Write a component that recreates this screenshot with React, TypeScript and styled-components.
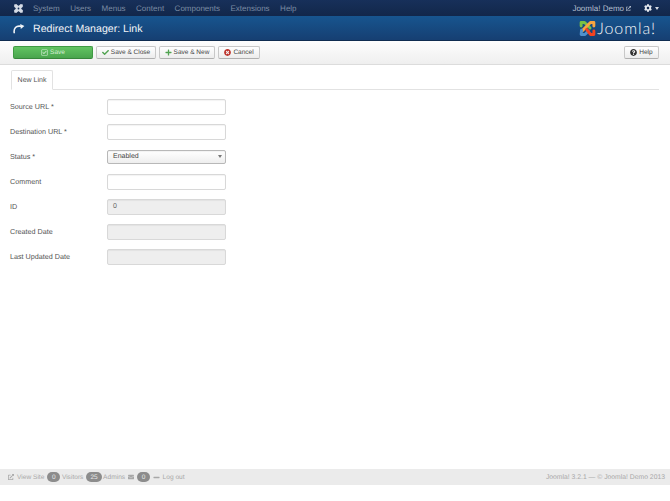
import React from "react";
import styled, { createGlobalStyle } from "styled-components";
import { FaCheck, FaPlus, FaTimesCircle, FaQuestionCircle, FaCog, FaRegCheckSquare, FaExternalLinkAlt, FaEnvelope, FaMinus } from "react-icons/fa";

const GlobalStyle = createGlobalStyle`
  html, body { margin: 0; padding: 0; background: #fff; }
  body { font-family: "Liberation Sans", Arial, sans-serif; font-size: 8px; color: #333; text-rendering: geometricPrecision; }
`;

const Page = styled.div`
  width: 670px;
  height: 501px;
  display: flex;
  flex-direction: column;
  overflow: hidden;
`;

const NavBar = styled.nav`
  height: 16px;
  flex: none;
  display: flex;
  align-items: center;
  padding: 0 11px 0 13px;
  background: linear-gradient(#17305a, #12274a);
  color: #7b8ba3;
  font-size: 8px;
`;

const NavLogo = styled.svg`
  width: 11px;
  height: 11px;
  margin-right: 9px;
`;

const NavItem = styled.span`
  margin-right: 10.5px;
`;

const NavRight = styled.div`
  margin-left: auto;
  display: flex;
  align-items: center;
  color: #b4bfd0;
`;

const SmallIcon = styled.span<{ $gap?: number; $left?: number }>`
  display: inline-flex;
  margin-left: ${(p) => p.$left ?? 0}px;
  margin-right: ${(p) => p.$gap ?? 0}px;
`;

const Caret = styled.span<{ $color: string }>`
  display: inline-block;
  width: 0;
  height: 0;
  border-left: 2.5px solid transparent;
  border-right: 2.5px solid transparent;
  border-top: 3px solid ${(p) => p.$color};
`;

const TitleBar = styled.header`
  height: 25px;
  flex: none;
  box-sizing: border-box;
  display: flex;
  align-items: center;
  padding: 1px 14px 0 13px;
  background: linear-gradient(#17558f, #163f72);
  border-bottom: 1px solid #0f2c50;
  color: #f2f5f8;
`;

const TitleText = styled.h1`
  margin: 0 0 0 8px;
  font-size: 10.6px;
  font-weight: 400;
`;

const Brand = styled.div`
  margin-left: auto;
  display: flex;
  align-items: center;
`;

const BrandName = styled.span`
  font-family: "Lato", "Open Sans", sans-serif;
  font-weight: 300;
  font-size: 16px;
  margin-left: 1px;
  letter-spacing: 0.9px;
  color: #f4f6f8;
`;

const Toolbar = styled.div`
  height: 24px;
  flex: none;
  box-sizing: border-box;
  display: flex;
  align-items: center;
  gap: 3px;
  padding: 0 11px 0 13px;
  background: linear-gradient(#fdfdfd, #efefef);
  border-bottom: 1px solid #dcdcdc;
`;

const Btn = styled.button<{ $width: number; $primary?: boolean }>`
  width: ${(p) => p.$width}px;
  height: 13px;
  box-sizing: border-box;
  padding: 0;
  display: flex;
  align-items: center;
  justify-content: center;
  gap: 2px;
  font: 6.5px "Liberation Sans", Arial, sans-serif;
  text-rendering: geometricPrecision;
  border-radius: 2px;
  border: 1px solid ${(p) => (p.$primary ? "#3f9a43" : "#c8c8c8")};
  border-bottom-color: ${(p) => (p.$primary ? "#37873b" : "#b0b0b0")};
  background: ${(p) => (p.$primary ? "linear-gradient(#62c462, #4aa54e)" : "linear-gradient(#fff, #ececec)")};
  color: ${(p) => (p.$primary ? "#d7eed7" : "#444")};
`;

const RightBtn = styled(Btn)`
  margin-left: auto;
`;

const Content = styled.main`
  flex: 1;
  padding: 5px 11px 0 11px;
`;

const Tabs = styled.div`
  height: 19px;
  border-bottom: 1px solid #e2e2e2;
  display: flex;
`;

const Tab = styled.div`
  height: 20px;
  width: 42px;
  box-sizing: border-box;
  display: flex;
  align-items: center;
  justify-content: center;
  background: #fff;
  border: 1px solid #e2e2e2;
  border-bottom-color: #fff;
  border-radius: 2px 2px 0 0;
  font-size: 7px;
  color: #555;
`;

const Form = styled.form`
  margin-top: 9px;
  margin-left: -1px;
  display: flex;
  flex-direction: column;
  gap: 10px;
`;

const Row = styled.div`
  display: flex;
  align-items: center;
  height: 15px;
`;

const Label = styled.label`
  width: 97px;
  flex: none;
  font-size: 7.2px;
  color: #555;
`;

const Field = styled.div<{ $disabled?: boolean }>`
  width: 119px;
  height: 16px;
  box-sizing: border-box;
  border: 1px solid #d8d8d8;
  border-radius: 2px;
  background: ${(p) => (p.$disabled ? "#eeeeee" : "#fff")};
  box-shadow: inset 0 1px 1px rgba(0, 0, 0, 0.05);
  padding: 0 5px;
  display: flex;
  align-items: center;
  font-size: 7px;
  color: #666;
`;

const SelectField = styled(Field)`
  height: 14px;
  justify-content: space-between;
  background: linear-gradient(#fff, #eee);
  border-color: #b8b8b8;
  color: #444;
  padding-right: 3px;
`;

const Footer = styled.footer`
  height: 16px;
  flex: none;
  margin-bottom: 16px;
  box-sizing: border-box;
  padding: 0 5px 0 8px;
  display: flex;
  align-items: center;
  background: #ebebeb;
  color: #a8a8a8;
  font-size: 6.6px;
`;

const Badge = styled.span`
  display: inline-flex;
  align-items: center;
  justify-content: center;
  height: 10px;
  min-width: 13px;
  padding: 0 4px;
  box-sizing: border-box;
  margin: 0 1.5px 0 3px;
  border-radius: 5px;
  background: #8c8c8c;
  color: #e8e8e8;
  font-size: 6.5px;
`;

const Copyright = styled.span`
  margin-left: auto;
  font-size: 6.8px;
`;

const navItems = ["System", "Users", "Menus", "Content", "Components", "Extensions", "Help"];

const fields = [
  { label: "Source URL *" },
  { label: "Destination URL *" },
  { label: "Status *", select: "Enabled" },
  { label: "Comment" },
  { label: "ID", disabled: true, value: "0" },
  { label: "Created Date", disabled: true },
  { label: "Last Updated Date", disabled: true },
];

const JoomlaMark = ({ size }: { size: number }) => (
  <svg width={size} height={size} viewBox="0 0 20 20" fill="none" strokeWidth="3.4" strokeLinecap="round" strokeLinejoin="round">
    <path d="M2.5 7 L2.5 3 L6.5 3 L13 9.5" stroke="#7ac143" />
    <path d="M17.5 7 L17.5 3 L13.5 3 L4 12.5" stroke="#f9a541" />
    <path d="M3 12 L2.5 17 L7 17 L11 13" stroke="#5091cd" />
    <path d="M9 11 L13.5 17 L17.5 17 L17.5 13" stroke="#f44321" />
  </svg>
);

export default function App() {
  return (
    <Page>
      <GlobalStyle />
      <NavBar>
        <NavLogo viewBox="0 0 20 20" fill="none" stroke="#d5dce6" strokeWidth="3.2" strokeLinejoin="round">
          <path d="M3 7 L3 3 L7 3 L17 13 L17 17 L13 17 L3 7 Z" fill="#d5dce6" strokeWidth="1.5" />
          <path d="M17 7 L17 3 L13 3 L3 13 L3 17 L7 17 L17 7 Z" fill="#d5dce6" strokeWidth="1.5" />
          <circle cx="10" cy="10" r="1.6" fill="#17305a" stroke="none" />
        </NavLogo>
        {navItems.map((item) => (
          <NavItem key={item}>{item}</NavItem>
        ))}
        <NavRight>
          Joomla! Demo
          <SmallIcon $left={2} $gap={13}>
            <FaExternalLinkAlt size={5} />
          </SmallIcon>
          <SmallIcon $gap={3}>
            <FaCog size={8} color="#e4e8ee" />
          </SmallIcon>
          <Caret $color="#d5dbe4" />
        </NavRight>
      </NavBar>
      <TitleBar>
        <svg width="12" height="12" viewBox="0 0 20 20" fill="none" stroke="#f2f5f8" strokeWidth="2.6" strokeLinecap="round">
          <path d="M2 16 C1 9 5 4 13 5.5" />
          <path d="M12 1.5 L19 5 L13 10 Z" fill="#f2f5f8" stroke="none" />
        </svg>
        <TitleText>Redirect Manager: Link</TitleText>
        <Brand>
          <JoomlaMark size={17} />
          <BrandName>Joomla!</BrandName>
        </Brand>
      </TitleBar>
      <Toolbar>
        <Btn $width={80} $primary>
          <FaRegCheckSquare size={7} /> Save
        </Btn>
        <Btn $width={60}>
          <FaCheck size={7} color="#51a351" /> Save &amp; Close
        </Btn>
        <Btn $width={56}>
          <FaPlus size={7} color="#51a351" /> Save &amp; New
        </Btn>
        <Btn $width={42}>
          <FaTimesCircle size={7} color="#bd362f" /> Cancel
        </Btn>
        <RightBtn $width={35}>
          <FaQuestionCircle size={7} color="#333" /> Help
        </RightBtn>
      </Toolbar>
      <Content>
        <Tabs>
          <Tab>New Link</Tab>
        </Tabs>
        <Form>
          {fields.map((f) => (
            <Row key={f.label}>
              <Label>{f.label}</Label>
              {f.select ? (
                <SelectField>
                  {f.select}
                  <Caret $color="#777" />
                </SelectField>
              ) : (
                <Field $disabled={f.disabled}>{f.value}</Field>
              )}
            </Row>
          ))}
        </Form>
      </Content>
      <Footer>
        <SmallIcon $gap={3}>
          <FaExternalLinkAlt size={6} />
        </SmallIcon>
        View Site
        <Badge>0</Badge>
        Visitors
        <Badge>25</Badge>
        Admins
        <SmallIcon $left={3}>
          <FaEnvelope size={6} />
        </SmallIcon>
        <Badge>0</Badge>
        <SmallIcon $left={1} $gap={3}>
          <FaMinus size={7} />
        </SmallIcon>
        Log out
        <Copyright>Joomla! 3.2.1 — © Joomla! Demo 2013</Copyright>
      </Footer>
    </Page>
  );
}
